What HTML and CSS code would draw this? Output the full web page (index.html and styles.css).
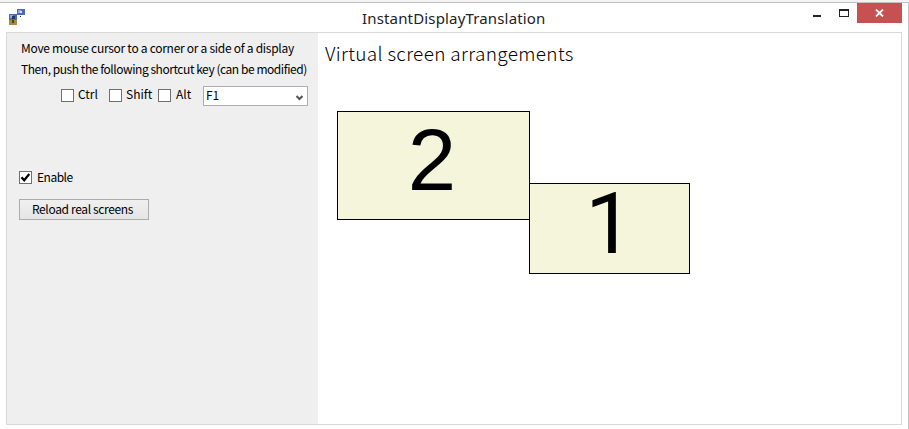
FILE: index.html
```html
<!DOCTYPE html>
<html lang="en">
<head>
<meta charset="utf-8">
<title>InstantDisplayTranslation</title>
<link rel="stylesheet" href="styles.css">
</head>
<body>
<div class="window">
  <header class="titlebar">
    <svg class="app-icon" width="18" height="17" viewBox="0 0 18 17">
      <path fill="#5068b0" d="M0 5h8v6H0z"/><path fill="#8fa5df" d="M1 6h3v3H1z"/><path fill="#26356f" d="M3 7h3v3H3z"/>
      <path fill="#a98a42" d="M0 11h8v5H0z"/><path fill="#554315" d="M3 11h2v3H3z"/>
      <path fill="#5068b5" d="M8 0h8v6H8z"/><path fill="#91a8e4" d="M9 1h3v3H9z"/><path fill="#dce5ff" d="M11 2h2v2h-2z"/><path fill="#222" d="M11 7h1v1h-1z"/>
    </svg>
    <h1 class="title">InstantDisplayTranslation</h1>
    <div class="controls">
      <span class="minimize"></span>
      <span class="maximize"></span>
      <span class="close"><svg width="9" height="8" viewBox="0 0 9 8"><path d="M1 .5l7 7M8 .5l-7 7" stroke="#fff" stroke-width="1.8"/></svg></span>
    </div>
  </header>
  <main class="client">
    <section class="settings">
      <p class="hint hint-one">Move mouse cursor to a corner or a side of a display</p>
      <p class="hint hint-two">Then, push the following shortcut key (can be modified)</p>
      <div class="keys">
        <label class="option ctrl"><span class="box"></span><span>Ctrl</span></label>
        <label class="option shift"><span class="box"></span><span>Shift</span></label>
        <label class="option alt"><span class="box"></span><span>Alt</span></label>
        <div class="combo"><span>F1</span><svg width="7" height="6" viewBox="0 0 7 6"><path d="M.5 1l3 3 3-3" fill="none" stroke="#555" stroke-width="2"/></svg></div>
      </div>
      <label class="option enable"><span class="box"><svg width="11" height="11" viewBox="0 0 11 11"><path d="M1.5 5.2l2.7 3L9.3 2" fill="none" stroke="#000" stroke-width="2.2"/></svg></span><span>Enable</span></label>
      <button class="reload">Reload real screens</button>
    </section>
    <section class="arrangement">
      <h2 class="heading">Virtual screen arrangements</h2>
      <div class="screen screen-two">2</div>
      <div class="screen screen-one">1</div>
    </section>
  </main>
</div>
</body>
</html>
```
FILE: styles.css
```css
* { box-sizing: border-box; }
body {
  margin: 0;
  overflow: hidden;
  background: #f3f3f3;
  color: #000;
  font: 12px/16px "Noto Sans CJK JP", sans-serif;
}
h1, h2, p { margin: 0; font-weight: 400; }
svg { display: block; }
.window {
  width: 909px;
  height: 427px;
  margin-top: 2px;
  border-top: 1px solid #c0c0c0;
  border-right: 1px solid #c0c0c0;
  background: #fff;
}
.titlebar { display: flex; height: 29px; padding-left: 9px; }
.app-icon { margin-top: 6px; }
.title {
  flex: 1;
  margin-left: 335px;
  color: #222;
  font: 15px/31px "Noto Sans", sans-serif;
  letter-spacing: .16px;
  white-space: nowrap;
}
.controls { display: flex; margin-right: 6px; }
.minimize { width: 8px; height: 2px; margin: 12px 18px 0 0; background: #222; }
.maximize { width: 10px; height: 8px; margin: 6px 8px 0 0; border: 1px solid #222; border-top-width: 2px; }
.close { display: flex; width: 45px; height: 20px; align-items: center; justify-content: center; background: #c75050; }
.client { display: flex; width: 896px; height: 393px; margin-left: 6px; border: 1px solid #d9d9d9; }
.settings { width: 311px; padding: 7px 0 0 12px; background: #efefef; }
.hint { width: max-content; margin-left: 2px; white-space: nowrap; }
.hint-one { letter-spacing: -.28px; }
.hint-two { margin-top: 5px; letter-spacing: -.45px; }
.keys { display: flex; height: 20px; margin: 9px 0 0 42px; align-items: flex-start; }
.option { display: flex; gap: 5px; line-height: 16px; white-space: nowrap; }
.box { flex: none; width: 13px; height: 13px; border: 1px solid #707070; background: #fff; }
.keys .box { margin-top: 3px; }
.keys .option { gap: 4px; }
.ctrl { width: 48px; }
.shift { width: 49px; }
.keys .alt { width: 45px; gap: 5px; }
.combo { display: flex; width: 105px; height: 20px; padding: 0 4px 0 2px; justify-content: space-between; align-items: center; border: 1px solid #abadb3; background: #fff; }
.combo span { line-height: 16px; margin-top: -3px; }
.combo svg { margin-top: 3px; }
.enable { margin-top: 63px; height: 17px; letter-spacing: -.7px; letter-spacing: -.5px; }
.enable .box { margin-top: 2px; }
.reload {
  display: block;
  width: 130px;
  height: 21px;
  margin-top: 13px;
  padding: 0 3px 1px 0;
  border: 1px solid #acacac;
  background: linear-gradient(#f0f0f0, #e5e5e5);
  color: #000;
  font: inherit;
  letter-spacing: -.35px;
}
.arrangement { position: relative; flex: 1; padding: 7px 0 0 7px; }
.heading { font-size: 19px; line-height: 26px; font-weight: 300; letter-spacing: .34px; }
.screen {
  position: absolute;
  border: 1px solid #000;
  background: #f5f5dc;
  font-family: "Liberation Sans", sans-serif;
  font-size: 87px;
  text-align: center;
}
.screen-two { left: 19px; top: 78px; width: 193px; height: 109px; padding-right: 3px; line-height: 96px; }
.screen-one { left: 211px; top: 150px; width: 161px; height: 91px; line-height: 80px; font-family: Roboto, sans-serif; font-size: 86px; }
```
